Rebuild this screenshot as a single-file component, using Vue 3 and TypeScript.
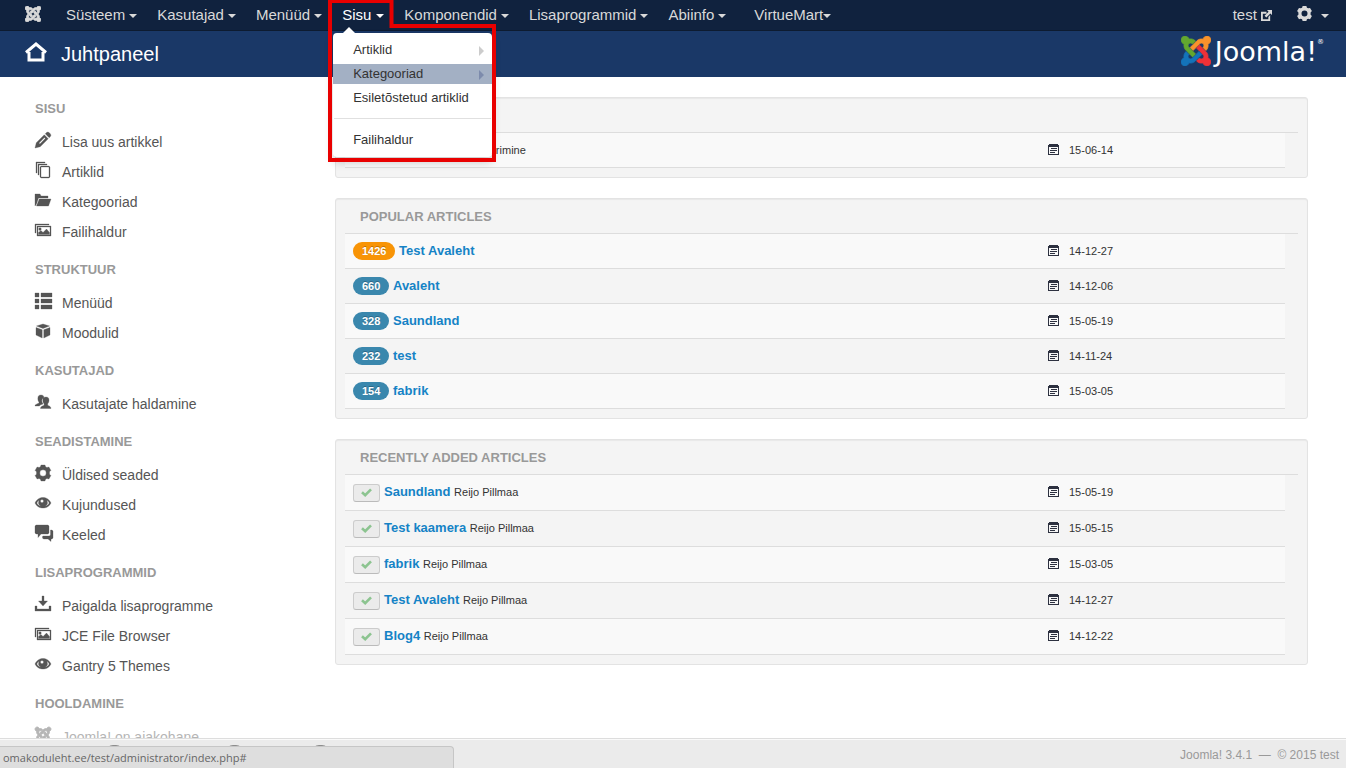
<script setup lang="ts">
import { ref } from 'vue'

interface NavItem { label: string; open?: boolean; tight?: boolean }
interface SideItem { label: string; icon: string; muted?: boolean }
interface SideGroup { title: string; items: SideItem[] }

const arm =
  'M16.719 14.759L14.22 17.26l-2.37 2.37-.462.466c-1.368 1.365-3.297 1.83-5.047 1.397-.327 1.424-1.604 2.49-3.13 2.49C1.438 23.983 0 22.547 0 20.77c0-1.518 1.055-2.79 2.469-3.123-.446-1.76.016-3.705 1.396-5.08l.179-.18 2.37 2.37-.184.181c-.769.779-.769 2.024 0 2.789.771.78 2.022.78 2.787.015l.465-.465 2.367-2.371 2.502-2.506z'
const arms = [
  { turn: 180, color: '#f9932b' },
  { turn: 270, color: '#ee3137' },
  { turn: 0, color: '#1473ba' },
  { turn: 90, color: '#63a72f' },
]

const gear =
  'M6 0h4l.6 1.800 1.300.7 2-.5 2 3.400-1.400 1.400v2.400l1.400 1.400-2 3.400-2-.5-1.300.7L10 16H6l-.6-1.800-1.300-.7-2 .5-2-3.400 1.400-1.400V6.800L.1 5.400l2-3.400 2 .5 1.300-.7zM8 4.800a3.200 3.200 0 100 6.400 3.200 3.200 0 000-6.400z'
const icons: Record<string, string> = {
  pencil:
    'M0 16l1.300-5.200L9.300 2.800l3.900 3.900-8 8zM10.300 1.800l1.200-1.200a2 2 0 012.600 0l1.300 1.300a2 2 0 010 2.600l-1.200 1.200zM4 11l.9.9 5.400-5.400-.9-.9z',
  stack:
    'M6 4h8l1 1v10l-1 1H6l-1-1V5zM6 5v10h8V5zM3 2h9v1H4v10H3zM1 0h9v1H2v10H1z',
  folder: 'M0 2h5l1 2h7v2H3.500L1.500 12 0 14zM4.300 7H16l-2.500 7H1.500z',
  image:
    'M0 2h14v1H1v8H0zM2 4h14v10H2zM3 5v8h12V5zM3.500 12.500V10.500L6 8.500l2 2L11.500 7l3 3.500v2zM5 5.800a1.300 1.300 0 110 2.600 1.300 1.300 0 010-2.600z',
  list: 'M0 0h4v4H0zM6 0h11v4H6zM0 6h4v4H0zM6 6h11v4H6zM0 12h4v4H0zM6 12h11v4H6z',
  cube: 'M8 1l6.500 2L8 5.500 1.500 3zM1 4.500l6.200 2.300V15L1 12zM15 4.500L8.800 6.800V15l6.200-3z',
  users:
    'M6 1c2 0 3 1 3 3-2 .5-2.500 2-2 4l1 2c-2 .5-3 1-3.500 2H0c0-2 3-2 4-3V8C3 7 2.800 5.500 2.900 4 3 2 4 1 6 1zM11 3c2 0 3 1.200 3 3.200 0 1.500-.5 2.700-1.300 3.600v1.400c1 .8 3.300 1 3.300 3.300H5.500c0-2.300 2.500-2.500 3.600-3.300V9.800C8.300 9 7.800 7.700 7.800 6.200 7.800 4.200 9 3 11 3z',
  gear,
  eye:
    'M0 8c2-4 5-5.500 8-5.500s6 1.500 8 5.500c-2 3.800-5 5-8 5s-6-1.200-8-5zM1.800 8c.8 1.600 2.200 2.900 4 3.300a4.500 4.500 0 01-1.600-6C3.200 5.800 2.400 6.800 1.800 8zM14.200 8c-.8 1.600-2.200 2.900-4 3.300a4.500 4.500 0 001.600-6c1 .5 1.800 1.500 2.400 2.700zM7 4.500a1.600 1.600 0 100 3.200 1.600 1.600 0 000-3.200z',
  comments:
    'M1 0h12l1 1v7l-1 1H6l-3 3.500V9H1L0 8V1zM15.500 5H17l1 1v7l-1 1h-1v2.500L13 14H8.500l-1-1v-1.500L8 11H14.500l1-1z',
  download: 'M7 0h2v5h3.500L8 10 3.500 5H7zM0 10h2v3h12v-3h2v5H0z',
}

const nav: NavItem[] = [
  { label: 'Süsteem' },
  { label: 'Kasutajad' },
  { label: 'Menüüd' },
  { label: 'Sisu', open: true },
  { label: 'Komponendid' },
  { label: 'Lisaprogrammid' },
  { label: 'Abiinfo' },
  { label: 'VirtueMart', tight: true },
]

const groups: SideGroup[] = [
  {
    title: 'Sisu',
    items: [
      { label: 'Lisa uus artikkel', icon: 'pencil' },
      { label: 'Artiklid', icon: 'stack' },
      { label: 'Kategooriad', icon: 'folder' },
      { label: 'Failihaldur', icon: 'image' },
    ],
  },
  {
    title: 'Struktuur',
    items: [
      { label: 'Menüüd', icon: 'list' },
      { label: 'Moodulid', icon: 'cube' },
    ],
  },
  { title: 'Kasutajad', items: [{ label: 'Kasutajate haldamine', icon: 'users' }] },
  {
    title: 'Seadistamine',
    items: [
      { label: 'Üldised seaded', icon: 'gear' },
      { label: 'Kujundused', icon: 'eye' },
      { label: 'Keeled', icon: 'comments' },
    ],
  },
  {
    title: 'Lisaprogrammid',
    items: [
      { label: 'Paigalda lisaprogramme', icon: 'download' },
      { label: 'JCE File Browser', icon: 'image' },
      { label: 'Gantry 5 Themes', icon: 'eye' },
    ],
  },
  { title: 'Hooldamine', items: [{ label: 'Joomla! on ajakohane', icon: 'joomla', muted: true }] },
]

const popular = [
  { hits: 1426, title: 'Test Avaleht', date: '14-12-27' },
  { hits: 660, title: 'Avaleht', date: '14-12-06' },
  { hits: 328, title: 'Saundland', date: '15-05-19' },
  { hits: 232, title: 'test', date: '14-11-24' },
  { hits: 154, title: 'fabrik', date: '15-03-05' },
]

const recent = ref([
  { title: 'Saundland', author: 'Reijo Pillmaa', date: '15-05-19' },
  { title: 'Test kaamera', author: 'Reijo Pillmaa', date: '15-05-15' },
  { title: 'fabrik', author: 'Reijo Pillmaa', date: '15-03-05' },
  { title: 'Test Avaleht', author: 'Reijo Pillmaa', date: '14-12-27' },
  { title: 'Blog4', author: 'Reijo Pillmaa', date: '14-12-22' },
])

const calendar = 'M0 1h1V0h9v1h1v10H0zM1 3v7h9V3zM3 4h6v1H3zM2 6h7v1H2zM2 8h5v1H2z'
</script>

<template>
  <div class="page">
    <nav class="topbar" aria-label="Peamenüü">
      <a class="brand" href="#" aria-label="Joomla">
        <svg class="mark" width="16" height="16" viewBox="0 0 24 24">
          <path v-for="a in arms" :key="a.turn" :d="arm" :transform="`rotate(${a.turn} 12 12)`" />
        </svg>
      </a>
      <ul class="menu">
        <li v-for="n in nav" :key="n.label" :class="{ open: n.open, tight: n.tight }">
          <button type="button" :aria-expanded="!!n.open">{{ n.label }}<i class="caret"></i></button>
          <template v-if="n.open">
            <div class="dropdown">
              <a href="#" class="sub">Artiklid</a>
              <a href="#" class="sub hover">Kategooriad</a>
              <a href="#">Esiletõstetud artiklid</a>
              <hr />
              <a href="#">Failihaldur</a>
            </div>
            <svg class="marker" width="168" height="162" viewBox="0 0 168 162" aria-hidden="true">
              <path d="M2 1H63.500V26H166V160H2z" fill="none" stroke="#e90000" stroke-width="4" />
            </svg>
          </template>
        </li>
      </ul>
      <a class="site" href="#">test
        <svg width="11" height="11" viewBox="0 0 12 12" fill="currentColor" fill-rule="evenodd">
          <path d="M0 2h6v2H2v6h6V7.500l2-2V12H0zM6.500 0H12v5.500l-1.800-1.800-4.400 4.400-1.900-1.900 4.400-4.400z" />
        </svg>
      </a>
      <button class="user" type="button" aria-label="Kasutaja">
        <svg width="15" height="15" viewBox="0 0 16 16" fill="currentColor" fill-rule="evenodd"><path :d="gear" /></svg>
        <i class="caret"></i>
      </button>
    </nav>

    <header class="header">
      <svg class="home" width="22" height="20" viewBox="0 0 22 20" fill="none" stroke="#fff">
        <path d="M1 10.500L11 2l10 8.500" stroke-width="3" />
        <path d="M4 10v8h14v-8" stroke-width="3" />
      </svg>
      <h1>Juhtpaneel</h1>
      <a class="logo" href="#">
        <svg width="30" height="30" viewBox="0 0 24 24">
          <path v-for="a in arms" :key="a.turn" :d="arm" :fill="a.color" :stroke="a.color" :transform="`rotate(${a.turn} 12 12)`" />
        </svg>
        <span>Joomla!</span><sup>®</sup>
      </a>
    </header>

    <div class="body">
      <aside class="sidebar">
        <section v-for="g in groups" :key="g.title">
          <h2>{{ g.title }}</h2>
          <ul>
            <li v-for="i in g.items" :key="i.label">
              <a href="#" :class="{ muted: i.muted }">
                <svg v-if="i.icon === 'joomla'" class="mark" width="16" height="16" viewBox="0 0 24 24">
                  <path v-for="a in arms" :key="a.turn" :d="arm" :transform="`rotate(${a.turn} 12 12)`" />
                </svg>
                <svg v-else class="glyph" width="16" height="16" viewBox="0 0 16 16">
                  <path :d="icons[i.icon]" />
                </svg>
                <span>{{ i.label }}</span>
              </a>
            </li>
          </ul>
        </section>
      </aside>

      <main class="main">
        <section class="panel">
          <h2>Logged-in Users</h2>
          <table>
            <tbody>
              <tr>
                <td class="role"><small>administreerimine</small></td>
                <td class="date"><svg width="11" height="11" viewBox="0 0 11 11" fill-rule="evenodd"><path :d="calendar" /></svg>15-06-14</td>
              </tr>
            </tbody>
          </table>
        </section>

        <section class="panel">
          <h2>Popular Articles</h2>
          <table>
            <tbody>
              <tr v-for="p in popular" :key="p.title">
                <td><span class="badge" :class="{ hot: p.hits > 1000 }">{{ p.hits }}</span> <a href="#">{{ p.title }}</a></td>
                <td class="date"><svg width="11" height="11" viewBox="0 0 11 11" fill-rule="evenodd"><path :d="calendar" /></svg>{{ p.date }}</td>
              </tr>
            </tbody>
          </table>
        </section>

        <section class="panel tall">
          <h2>Recently Added Articles</h2>
          <table>
            <tbody>
              <tr v-for="r in recent" :key="r.title">
                <td>
                  <button class="state" type="button" aria-label="Avaldatud">
                    <svg width="11" height="9" viewBox="0 0 11 9" fill="none" stroke="#8cc490" stroke-width="2.600"><path d="M1 4.200L4.200 7.200 10 1.300" /></svg>
                  </button>
                  <a href="#">{{ r.title }}</a> <small>{{ r.author }}</small>
                </td>
                <td class="date"><svg width="11" height="11" viewBox="0 0 11 11" fill-rule="evenodd"><path :d="calendar" /></svg>{{ r.date }}</td>
              </tr>
            </tbody>
          </table>
        </section>
      </main>
    </div>

    <footer class="footer">
      <div class="counts" aria-hidden="true"><i></i><i></i><i></i></div>
      <p>Joomla! 3.4.1 &nbsp;—&nbsp; © 2015 test</p>
      <div class="status">omakoduleht.ee/test/administrator/index.php#</div>
    </footer>
  </div>
</template>

<style>
html,
body {
  margin: 0;
  overflow: hidden;
}
</style>

<style scoped>
.page {
  display: flex;
  flex-direction: column;
  height: 100vh;
  background: #fff;
  color: #333;
  font: 13px/18px "Liberation Sans", Arial, sans-serif;
}
a {
  color: #1583c6;
  text-decoration: none;
}
ul {
  list-style: none;
  margin: 0;
  padding: 0;
}
button {
  border: 0;
  background: none;
  font: inherit;
  color: inherit;
  padding: 0;
}
h1,
h2,
p {
  margin: 0;
}
.mark {
  fill: currentColor;
  stroke: currentColor;
  stroke-width: 1.2;
}
.glyph {
  fill: currentColor;
  fill-rule: evenodd;
  stroke: currentColor;
  stroke-width: 0.3;
}

.topbar {
  position: relative;
  z-index: 2;
  display: flex;
  align-items: center;
  flex: none;
  height: 30px;
  padding: 0 17px 0 25px;
  background: #10223e;
  border-bottom: 1px solid #0d1b30;
  color: #d9d9d9;
  font-size: 15px;
  line-height: 30px;
}
.brand {
  display: flex;
  margin: 0 15px 2px 0;
  color: #d9d9d9;
}
.menu {
  display: flex;
  flex: 1;
}
.menu li {
  position: relative;
}
.menu button {
  display: block;
  padding: 0 10px;
}
.menu .open button {
  color: #fff;
}
.menu .tight {
  margin-left: 8px;
}
.caret {
  display: inline-block;
  margin-left: 4px;
  border: 4px solid transparent;
  border-top-color: currentColor;
  border-bottom: 0;
  vertical-align: middle;
}
.open .caret {
  margin-left: 5px;
}
.tight .caret {
  margin-left: 0;
}
.site {
  margin-right: 25px;
  color: #d9d9d9;
}
.site svg {
  vertical-align: -1px;
}
.user {
  display: flex;
  align-items: center;
}
.user svg {
  margin-bottom: 3px;
}
.user .caret {
  margin: 2px 0 0 9px;
}

.dropdown {
  position: absolute;
  z-index: 1;
  top: 33px;
  left: 1px;
  width: 159px;
  padding: 7px 0;
  box-sizing: border-box;
  background: #fff;
  border-radius: 4px;
  box-shadow: 0 5px 10px rgba(0, 0, 0, 0.2);
  font-size: 13px;
  line-height: 20px;
}
.dropdown::before {
  content: "";
  position: absolute;
  top: -6px;
  left: 10px;
  border: 6px solid transparent;
  border-top: 0;
  border-bottom-color: #fff;
}
.dropdown a {
  display: flex;
  align-items: center;
  justify-content: space-between;
  margin-bottom: 4px;
  padding: 0 8px 0 20px;
  color: #333;
  white-space: nowrap;
}
.dropdown a:last-child {
  margin-bottom: 0;
}
.dropdown .sub::after {
  content: "";
  margin-top: 2px;
  border: 5px solid transparent;
  border-left-color: #ccc;
  border-right: 0;
}
.dropdown .hover {
  background: #a3b0c4;
}
.dropdown .hover::after {
  border-left-color: #7d8bac;
}
.dropdown hr {
  height: 1px;
  margin: 10px 1px 11px;
  border: 0;
  background: #e0e0e0;
}
.marker {
  position: absolute;
  z-index: 2;
  top: 0;
  left: -4px;
  pointer-events: none;
}

.header {
  display: flex;
  align-items: center;
  flex: none;
  height: 46px;
  padding: 0 22px 0 25px;
  background: #1a3867;
  color: #fff;
}
.home {
  margin: 0 14px 4px 0;
}
.header h1 {
  flex: 1;
  font-size: 20px;
  font-weight: 400;
  line-height: 46px;
}
.logo {
  display: flex;
  align-items: center;
  color: #fff;
  font: 27px/30px "DejaVu Sans", sans-serif;
  margin-bottom: 6px;
}
.logo svg {
  stroke-width: 0.6;
}
.logo span {
  margin: 2px 0 0 4px;
}
.logo sup {
  align-self: flex-start;
  font-size: 7px;
  line-height: 14px;
}

.body {
  display: grid;
  grid-template-columns: 280px 1fr;
  gap: 20px;
  flex: 1;
  min-height: 0;
  overflow: hidden;
  padding: 20px 38px 0 35px;
}
.sidebar {
  padding-top: 1px;
}
.sidebar h2,
.panel h2 {
  color: #999;
  font-size: 13px;
  font-weight: 700;
  text-transform: uppercase;
}
.sidebar section {
  margin-bottom: 12px;
}
.sidebar h2 {
  padding: 1px 0 8px;
  line-height: 20px;
}
.sidebar a {
  display: flex;
  gap: 11px;
  color: #555;
  font-size: 14px;
  line-height: 30px;
}
.sidebar a svg {
  flex: none;
  margin-top: 5px;
  overflow: visible;
}
.sidebar .muted {
  color: #b5b5b5;
}

.panel {
  margin-bottom: 20px;
  padding: 0 9px 9px;
  background: #f4f4f4;
  border: 1px solid #e3e3e3;
  border-radius: 3px;
  box-shadow: inset 0 1px 1px rgba(0, 0, 0, 0.05);
}
.panel h2 {
  padding: 2px 15px 0;
  border-bottom: 1px solid #ddd;
  line-height: 32px;
}
.panel table {
  width: calc(100% - 13px);
  border-spacing: 0;
  table-layout: fixed;
}
.panel td {
  height: 34px;
  padding: 0 8px;
  border-bottom: 1px solid #ddd;
  white-space: nowrap;
}
.panel tr:nth-child(odd) td {
  background: #f9f9f9;
}
.panel .role {
  padding-left: 94px;
}
.tall td {
  height: 35px;
}
.panel td a {
  font-weight: 700;
}
.panel small {
  font-size: 11px;
}
.panel .date {
  width: 229px;
  font-size: 11px;
}
.tall .date {
  height: 33px;
  padding-bottom: 2px;
}
.date svg {
  margin-right: 10px;
  fill: #2d3140;
  vertical-align: -1px;
}
.badge {
  display: inline-block;
  padding: 0 9px;
  border-radius: 9px;
  background: #3a87ad;
  color: #fff;
  font-size: 11px;
  font-weight: 700;
  line-height: 18px;
  text-shadow: 0 -1px 0 rgba(0, 0, 0, 0.25);
}
.badge.hot {
  background: #f89406;
}
.state {
  display: inline-flex;
  align-items: center;
  justify-content: center;
  width: 27px;
  height: 18px;
  margin-right: 4px;
  border: 1px solid #ccc;
  border-bottom-color: #bbb;
  border-radius: 3px;
  background: #ebebeb;
  vertical-align: middle;
}

.footer {
  position: relative;
  display: flex;
  justify-content: flex-end;
  flex: none;
  height: 29px;
  padding: 0 7px;
  background: #ebebeb;
  border-top: 1px solid #ddd;
  box-shadow: inset 0 1px 0 #fafafa;
  color: #999;
  font-size: 12px;
  line-height: 32px;
}
.counts {
  position: absolute;
  top: 6px;
  left: 106px;
  display: flex;
  gap: 103px;
}
.counts i {
  width: 17px;
  height: 14px;
  border-radius: 7px;
  background: #8d8d8d;
}
.counts i:last-child {
  margin-left: -34px;
}
.status {
  position: absolute;
  bottom: 0;
  left: 0;
  width: 454px;
  height: 22px;
  padding-left: 3px;
  box-sizing: border-box;
  background: #dedede;
  border: 1px solid #c6c6c6;
  border-width: 1px 1px 0 0;
  border-radius: 0 4px 0 0;
  color: #666;
  font: 11px/22px "Open Sans", "Noto Sans", sans-serif;
}
</style>
